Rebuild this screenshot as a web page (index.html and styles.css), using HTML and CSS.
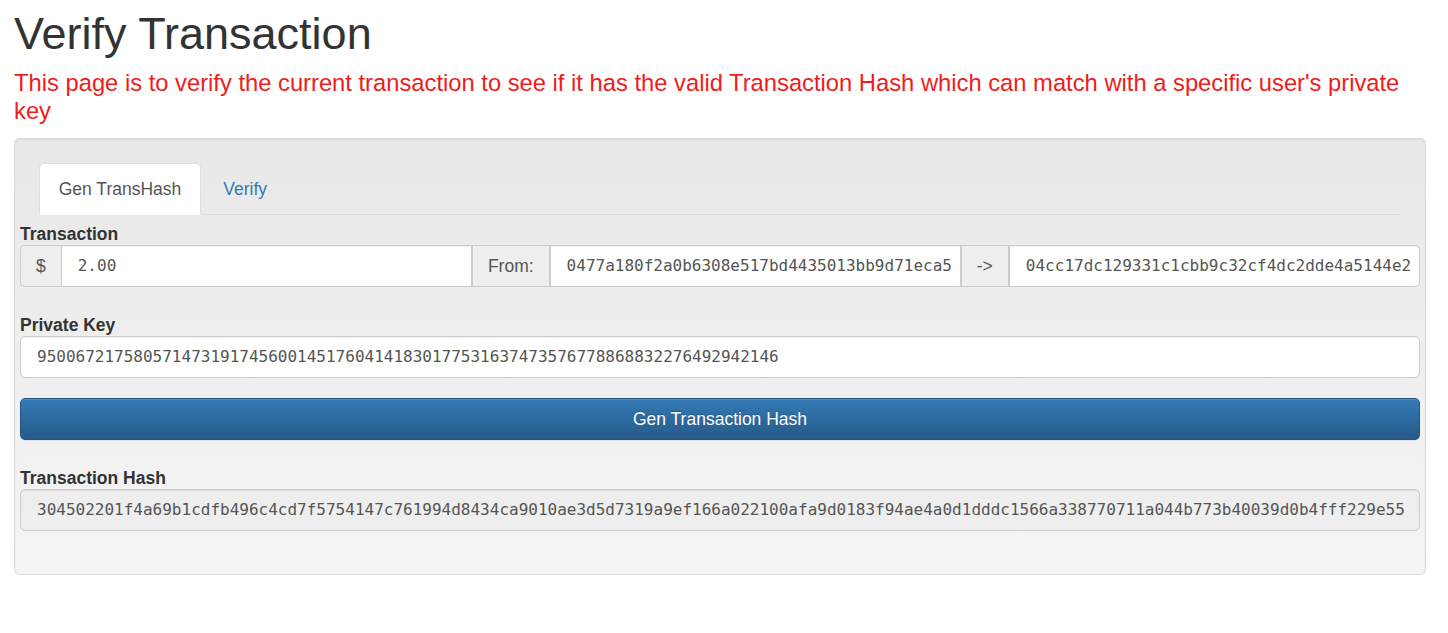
FILE: index.html
```html
<!DOCTYPE html>
<html lang="en">
<head>
<meta charset="utf-8">
<title>Verify Transaction</title>
<link rel="stylesheet" href="styles.css">
</head>
<body>
<div class="page">
  <h1 class="title">Verify Transaction</h1>
  <p class="intro">This page is to verify the current transaction to see if it has the valid Transaction Hash which can match with a specific user's private key</p>
  <div class="well">
    <ul class="tabs">
      <li class="tab tab-active"><span class="tab-link">Gen TransHash</span></li>
      <li class="tab"><a class="tab-link tab-link-inactive" href="#">Verify</a></li>
    </ul>
    <div class="tab-content">
      <div class="label label-first">Transaction</div>
      <div class="input-group">
        <span class="addon addon-first">$</span>
        <div class="field field-mid">2.00</div>
        <span class="addon addon-mid">From:</span>
        <div class="field field-mid">0477a180f2a0b6308e517bd4435013bb9d71eca5</div>
        <span class="addon addon-mid">-&gt;</span>
        <div class="field field-last">04cc17dc129331c1cbb9c32cf4dc2dde4a5144e2</div>
      </div>
      <div class="label">Private Key</div>
      <div class="field field-full">95006721758057147319174560014517604141830177531637473576778868832276492942146</div>
      <button class="btn-primary" type="button">Gen Transaction Hash</button>
      <div class="label">Transaction Hash</div>
      <div class="field field-full field-readonly">304502201f4a69b1cdfb496c4cd7f5754147c761994d8434ca9010ae3d5d7319a9ef166a022100afa9d0183f94ae4a0d1dddc1566a338770711a044b773b40039d0b4fff229e55</div>
    </div>
  </div>
</div>
</body>
</html>
```
FILE: styles.css
```css
* { box-sizing: border-box; }

html, body {
  margin: 0;
  padding: 0;
  background: #fff;
}

body {
  font-family: "Liberation Sans", Arial, sans-serif;
  font-size: 17.5px;
  line-height: 1.42857;
  color: #333;
}

.page {
  padding: 0 22px 0 14px;
}

.title {
  margin: 10px 0 11px;
  font-size: 45px;
  font-weight: 500;
  line-height: 48px;
  color: #333;
}

.intro {
  margin: 0;
  font-size: 23.75px;
  line-height: 27.6px;
  color: #f01c1c;
}

.well {
  margin-top: 14px;
  padding: 24px 25px 43px 24px;
  border: 1px solid #dcdcdc;
  border-radius: 5px;
  background: linear-gradient(to bottom, #e8e8e8 0%, #f5f5f5 100%);
  box-shadow: inset 0 1px 3px rgba(0,0,0,.05), 0 1px 0 rgba(255,255,255,.1);
}

.tabs {
  display: flex;
  margin: 0;
  padding: 0;
  list-style: none;
  border-bottom: 1px solid #ddd;
}

.tab {
  margin-bottom: -1px;
  margin-right: 2.5px;
}

.tab-link {
  display: block;
  padding: 12.5px 18.75px;
  line-height: 25px;
  border: 1px solid transparent;
  border-radius: 5px 5px 0 0;
  text-decoration: none;
}

.tab-active .tab-link {
  background: #fff;
  color: #555;
  border-color: #ddd #ddd transparent;
}

.tab-link-inactive {
  color: #337ab7;
}

.tab-content {
  margin: 0 -20px 0 -19px;
}

.label {
  display: block;
  margin-top: 28px;
  margin-bottom: 1px;
  font-weight: 700;
  line-height: 20px;
  color: #333;
}

.label-first {
  margin-top: 9px;
}

.input-group {
  display: flex;
  height: 42px;
}

.addon {
  display: flex;
  align-items: center;
  justify-content: center;
  padding: 0 15px;
  background: #eee;
  border: 1px solid #ccc;
  color: #555;
  font-size: 17.5px;
  white-space: nowrap;
}

.addon-first {
  border-radius: 5px 0 0 5px;
  border-right: 0;
}

.field {
  height: 42px;
  padding: 0 14px 0 16px;
  background: #fff;
  border: 1px solid #ccc;
  color: #555;
  font-family: "DejaVu Sans Mono", "Liberation Mono", monospace;
  font-size: 16px;
  line-height: 40px;
  white-space: nowrap;
  overflow: hidden;
  box-shadow: inset 0 1px 1px rgba(0,0,0,.075);
}

.field-mid {
  flex: 1 1 0;
  min-width: 0;
}

.field-last {
  flex: 1 1 0;
  min-width: 0;
  border-radius: 0 5px 5px 0;
}

.field-full {
  border-radius: 5px;
}

.field-readonly {
  background: #eee;
}

.btn-primary {
  display: block;
  width: 100%;
  height: 42px;
  margin-top: 20px;
  padding: 0 15px;
  border: 1px solid #245580;
  border-radius: 5px;
  background: linear-gradient(to bottom, #337ab7 0%, #265a88 100%);
  color: #fff;
  font-family: "Liberation Sans", Arial, sans-serif;
  font-size: 17.5px;
  line-height: 25px;
  text-shadow: 0 -1px 0 rgba(0,0,0,.2);
  box-shadow: inset 0 1px 0 rgba(255,255,255,.15), 0 1px 1px rgba(0,0,0,.075);
  cursor: pointer;
}
```
